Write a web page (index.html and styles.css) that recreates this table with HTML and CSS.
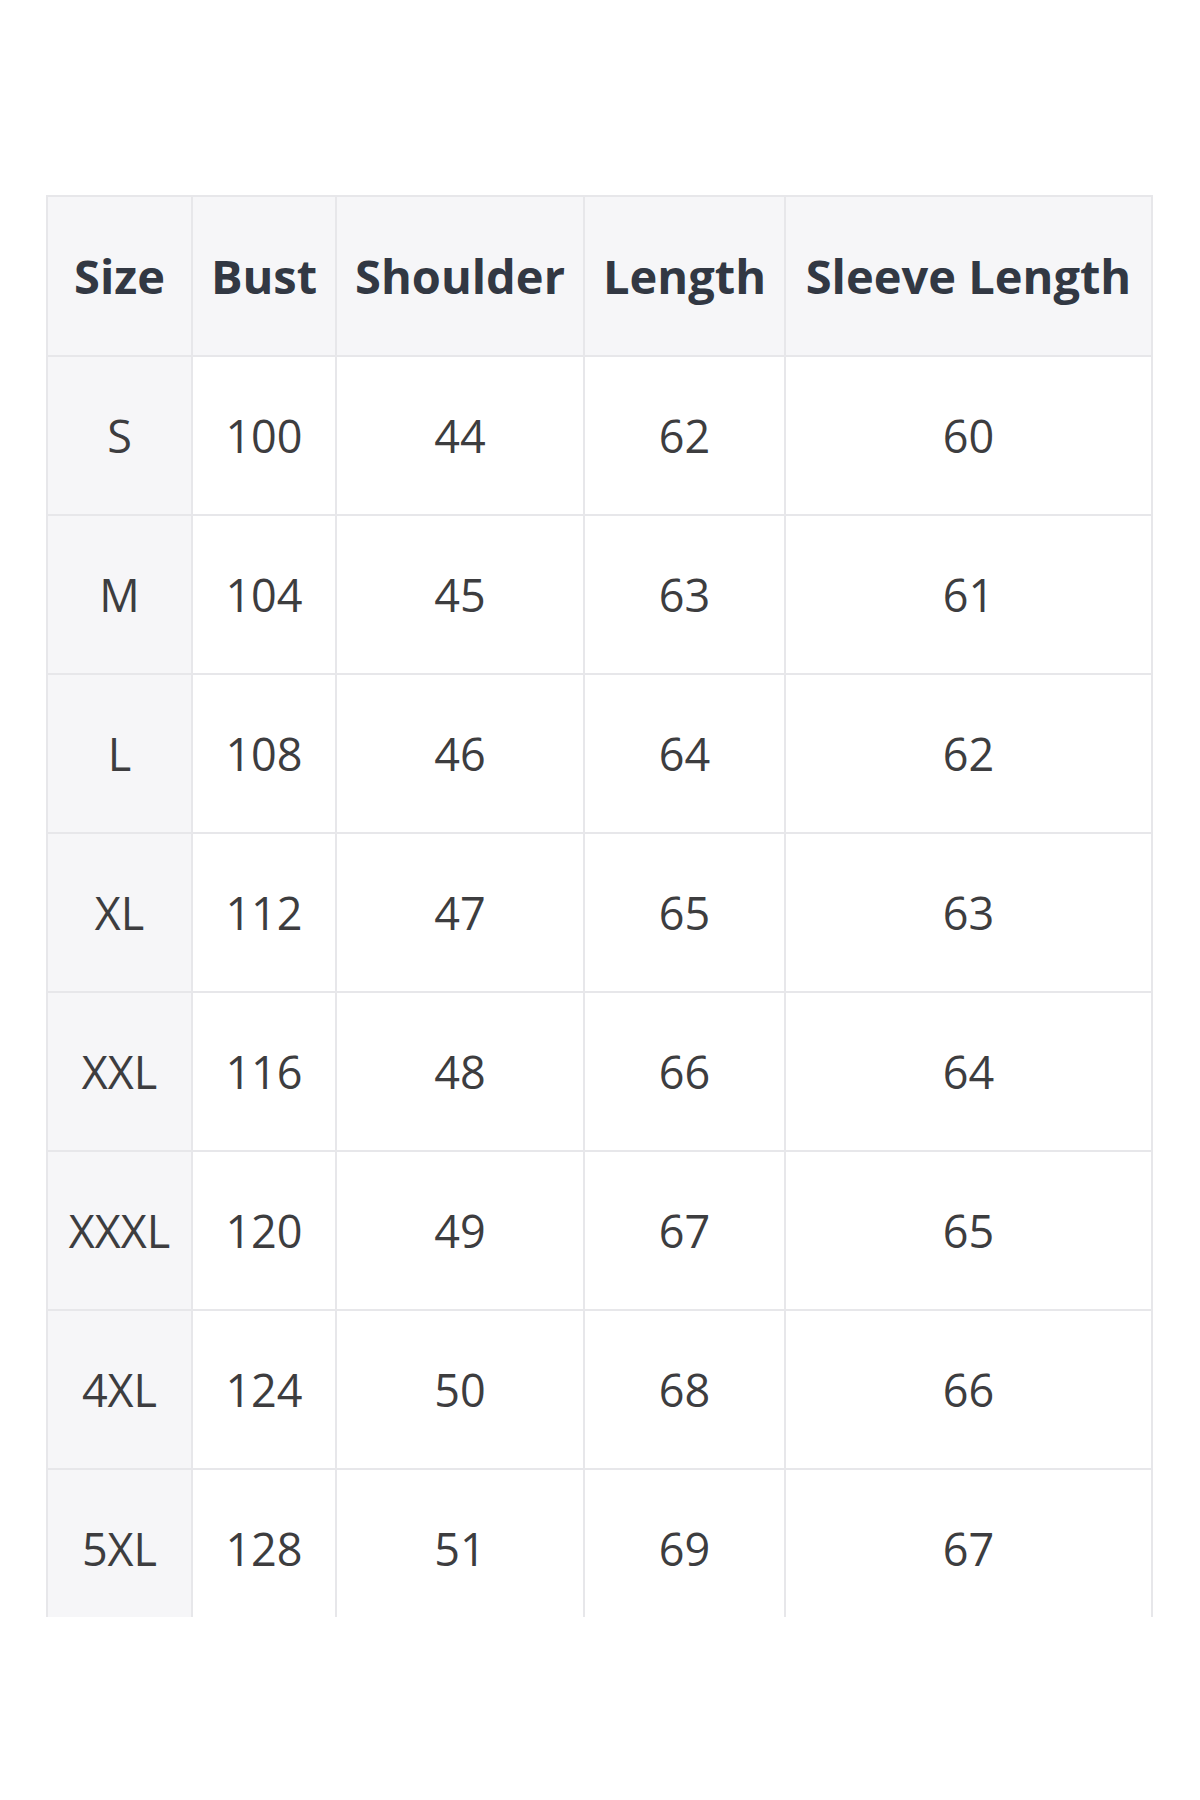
FILE: index.html
```html
<!DOCTYPE html>
<html>
<head>
<meta charset="utf-8">
<link rel="stylesheet" href="styles.css">
</head>
<body>
<div class="page">
  <div class="chart">
    <table class="size-table">
      <colgroup>
        <col class="c-size"><col class="c-bust"><col class="c-shoulder"><col class="c-length"><col class="c-sleeve">
      </colgroup>
      <thead>
        <tr><th>Size</th><th>Bust</th><th>Shoulder</th><th>Length</th><th>Sleeve Length</th></tr>
      </thead>
      <tbody>
        <tr><td class="first">S</td><td>100</td><td>44</td><td>62</td><td>60</td></tr>
        <tr><td class="first">M</td><td>104</td><td>45</td><td>63</td><td>61</td></tr>
        <tr><td class="first">L</td><td>108</td><td>46</td><td>64</td><td>62</td></tr>
        <tr><td class="first">XL</td><td>112</td><td>47</td><td>65</td><td>63</td></tr>
        <tr><td class="first">XXL</td><td>116</td><td>48</td><td>66</td><td>64</td></tr>
        <tr><td class="first">XXXL</td><td>120</td><td>49</td><td>67</td><td>65</td></tr>
        <tr><td class="first">4XL</td><td>124</td><td>50</td><td>68</td><td>66</td></tr>
        <tr><td class="first">5XL</td><td>128</td><td>51</td><td>69</td><td>67</td></tr>
      </tbody>
    </table>
  </div>
</div>
</body>
</html>
```

FILE: styles.css
```css
html, body {
  margin: 0;
  padding: 0;
  background: #ffffff;
}
.page {
  padding-top: 195px;
  padding-left: 45px;
}
.chart {
  width: 1110px;
  height: 1422px;
  overflow: hidden;
  padding-left: 1px;
}
.size-table {
  width: 1105px;
  table-layout: fixed;
  border-collapse: collapse;
  font-family: "Open Sans", "Liberation Sans", sans-serif;
}
.c-size { width: 145px; }
.c-bust { width: 144px; }
.c-shoulder { width: 248px; }
.c-length { width: 201px; }
.c-sleeve { width: 367px; }
.size-table th,
.size-table td {
  border: 2px solid #e7e7ea;
  text-align: center;
  vertical-align: middle;
  padding: 0;
  white-space: nowrap;
}
.size-table th {
  height: 158px;
  background: #f6f6f8;
  color: #323843;
  font-weight: 700;
  font-size: 47px;
}
.size-table td {
  height: 157px;
  color: #3d3d3f;
  font-weight: 400;
  font-size: 45px;
}
.size-table td.first {
  background: #f6f6f8;
}
```
